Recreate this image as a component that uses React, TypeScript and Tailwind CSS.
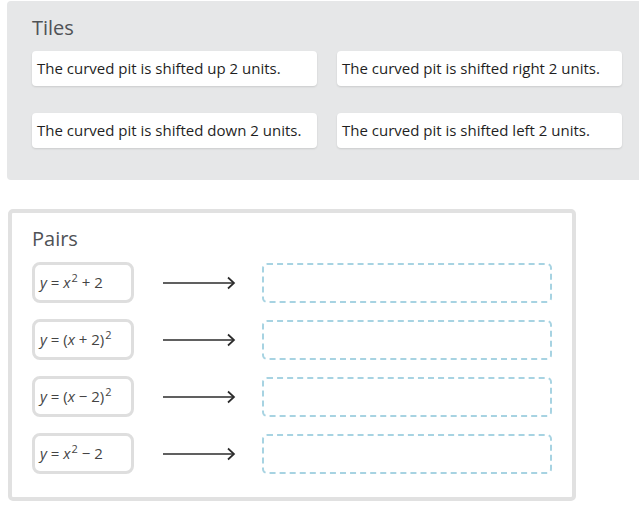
import React from "react";

const tiles = [
  "The curved pit is shifted up 2 units.",
  "The curved pit is shifted right 2 units.",
  "The curved pit is shifted down 2 units.",
  "The curved pit is shifted left 2 units.",
];

function Sup({ children }: { children: React.ReactNode }) {
  return <sup className="text-[11px] top-[-0.6em] ml-[1px]">{children}</sup>;
}

const I = ({ children }: { children: React.ReactNode }) => <i>{children}</i>;

const exprs: React.ReactNode[] = [
  <>
    <I>y</I> = <I>x</I>
    <Sup>2</Sup> + 2
  </>,
  <>
    <I>y</I> = (<I>x</I> + 2)
    <Sup>2</Sup>
  </>,
  <>
    <I>y</I> = (<I>x</I> − 2)
    <Sup>2</Sup>
  </>,
  <>
    <I>y</I> = <I>x</I>
    <Sup>2</Sup> − 2
  </>,
];

function Arrow() {
  return (
    <svg width="73" height="14" viewBox="0 0 73 14" className="block">
      <line x1="0" y1="7" x2="71" y2="7" stroke="#2b2b2b" strokeWidth="1.4" />
      <polyline points="65,1.5 71,7 65,12.5" fill="none" stroke="#2b2b2b" strokeWidth="1.7" />
    </svg>
  );
}

export default function App() {
  return (
    <div className="w-[639px] h-[505px] bg-white overflow-hidden" style={{ fontFamily: '"Open Sans", sans-serif' }}>
      <div className="ml-[7px] mt-[1px] h-[179px] bg-[#e6e7e8] rounded-l-[4px] pl-[25px] pt-[13px]">
        <div className="text-[20px] leading-[28px] text-[#4f5256]">Tiles</div>
        <div className="mt-[9px] grid grid-cols-[285px_285px] gap-x-[20px] gap-y-[27px]">
          {tiles.map((t) => (
            <div
              key={t}
              className="h-[35px] bg-white rounded-[4px] shadow-[0_1px_2px_rgba(0,0,0,0.12)] pl-[5px] flex items-center text-[15px] text-[#1f1f1f]"
            >
              {t}
            </div>
          ))}
        </div>
      </div>
      <div className="ml-[8px] mt-[29px] w-[568px] h-[292px] border-[4px] border-[#e1e1e1] rounded-[5px] pl-[20px] pt-[12px]">
        <div className="text-[20px] leading-[28px] text-[#4f5256]">Pairs</div>
        <div className="mt-[9px] flex flex-col gap-[16px]">
          {exprs.map((e, i) => (
            <div key={i} className="flex items-center">
              <div className="w-[102px] h-[41px] border-[3px] border-[#dedede] rounded-[8px] pl-[5px] flex items-center text-[15px] text-[#444]">
                <span className="whitespace-nowrap">{e}</span>
              </div>
              <div className="ml-[29px] mt-[1px]">
                <Arrow />
              </div>
              <div className="ml-[26px] w-[290px] h-[40px] border-2 border-dashed border-[#a7d3e2] rounded-[5px]" />
            </div>
          ))}
        </div>
      </div>
    </div>
  );
}
